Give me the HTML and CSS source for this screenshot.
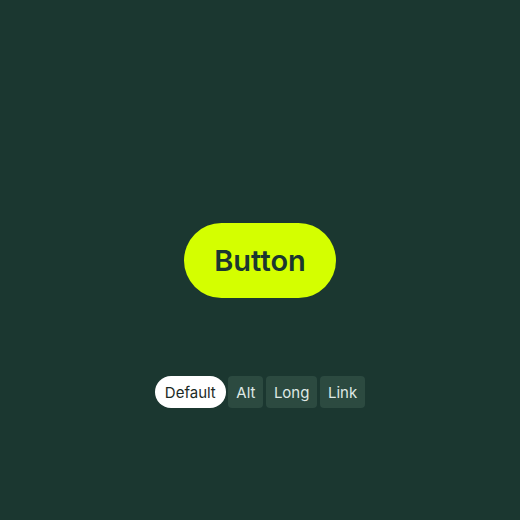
FILE: index.html
```html
<!DOCTYPE html>
<html>
<head>
<meta charset="utf-8">
<link rel="stylesheet" href="styles.css">
</head>
<body>
<main class="stage">
  <button class="cta">Button</button>
  <nav class="tabs">
    <span class="tab active">Default</span>
    <span class="tab">Alt</span>
    <span class="tab">Long</span>
    <span class="tab">Link</span>
  </nav>
</main>
</body>
</html>
```
FILE: styles.css
```css
html, body {
  margin: 0;
  height: 100%;
  background: #1b3730;
}
.stage {
  box-sizing: border-box;
  height: 520px;
  padding-top: 223px;
  display: flex;
  flex-direction: column;
  align-items: center;
  gap: 78px;
  font-family: Inter, "Noto Sans", sans-serif;
}
.cta {
  width: 152px;
  height: 75px;
  border: none;
  border-radius: 38px;
  background: #d4ff00;
  color: #1b3730;
  font-family: Inter, "Noto Sans", sans-serif;
  font-size: 29px;
  font-weight: 600;
  padding: 0;
  letter-spacing: 0;
}
.tabs {
  display: flex;
  gap: 2.5px;
}
.tab {
  height: 32px;
  display: flex;
  align-items: center;
  padding: 0 8px;
  background: #2c4a40;
  color: #dfe8e4;
  border-radius: 4px;
  font-size: 15px;
}
.tab.active {
  background: #ffffff;
  color: #1b2a25;
  border-radius: 16px;
  padding: 0 10px;
}
```
